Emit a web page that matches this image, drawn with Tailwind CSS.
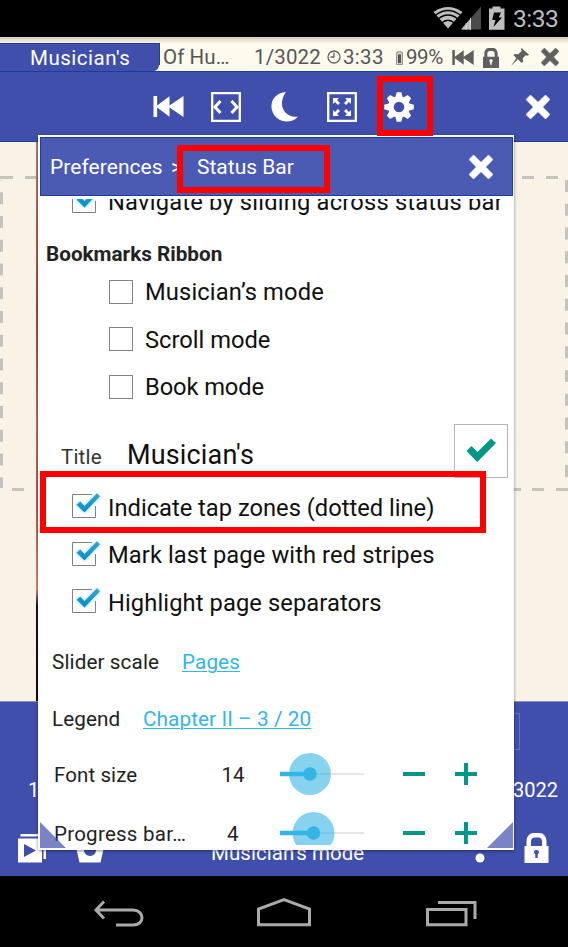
<!DOCTYPE html>
<html lang="en">
<head>
<meta charset="utf-8">
<title>Status Bar Preferences</title>
<script src="https://cdn.jsdelivr.net/npm/@tailwindcss/browser@4"></script>
</head>
<body class="w-[568px] h-[947px] overflow-hidden bg-black">
<svg class="absolute w-0 h-0">
  <defs>
    <symbol id="rewind" viewBox="0 0 30 21"><path d="M0 0h3.600v9.600L16 .3v9.300L30 0v21L16 11.400v9.300L3.600 11.400V21H0z"/></symbol>
    <symbol id="cross" viewBox="0 0 24 24"><path d="M4.500 0 12 7.300 19.500 0 24 4.500 16.700 12 24 19.500 19.500 24 12 16.700 4.500 24 0 19.500 7.300 12 0 4.500z" stroke="currentColor" stroke-width=".6" stroke-linejoin="round"/></symbol>
    <symbol id="lock" viewBox="0 0 24 30"><path fill-rule="evenodd" d="M0 13h2V8.500C2 3 5.500 0 9 0h6c3.500 0 7 3 7 8.500V13h2v17H0zM6.500 13h11V8.500C17.500 6 16 4.500 14 4.500h-4C8 4.500 6.500 6 6.500 8.500zM12 17a2.200 2.200 0 0 0-1.200 4.200V25h2.400v-3.800A2.200 2.200 0 0 0 12 17z"/></symbol>
    <linearGradient id="tick" x1="0" y1="0" x2="0" y2="1"><stop offset="0" stop-color="#3aa5d0"/><stop offset="1" stop-color="#008fc6"/></linearGradient>
    <filter id="glow" x="-40%" y="-40%" width="180%" height="180%"><feGaussianBlur stdDeviation="2"/></filter>
    <symbol id="checked" viewBox="0 0 34 30" overflow="visible">
      <path d="M24.500 14v11.500H1.500v-23H21" fill="none" stroke="#808080"/>
      <path d="M5 13l4-3.500 4.500 4.500L26 1l3.500 3.500L14 21z" fill="#8fd8f5" fill-opacity=".7" filter="url(#glow)"/>
      <path d="M5.500 12.800l3.700-3.200 4.300 4.400L26 1.200l3 3L13.500 20.600z" fill="url(#tick)"/>
    </symbol>
  </defs>
</svg>
<div class="relative w-[568px] h-[947px] flex flex-col font-['Roboto',sans-serif] overflow-hidden">

  <!-- system bar -->
  <div class="h-[37px] shrink-0 bg-black flex justify-end">
    <svg class="w-[134px] h-[37px] shrink-0" viewBox="434 0 134 37">
      <defs><clipPath id="fan"><path d="M447.500 29 430 9V0h36v9z"/></clipPath></defs>
      <path d="M433.500 12Q447.800 2 462.500 12L448 28.500z" fill="#bebebe"/>
      <g fill="none" stroke="#000" stroke-width="1.300" clip-path="url(#fan)">
        <path d="M435 15.500Q448 5.500 461 15.500M438 19Q448 11 458 19M441.500 23Q448 17.500 454.500 23"/>
      </g>
      <path d="M481 6.500V29.500H461z" fill="#4b4b4b"/><path d="M471 18v11.500H461z" fill="#bebebe"/><path d="M466 23v7M470.500 18v12" stroke="#e5e5e5" stroke-width=".7"/>
      <path d="M489 8.500h3.500V6.500h8v2h4v21.200H489z" fill="#bebebe"/>
      <path d="M494 12.500h7l-2.300 5h3.300l-8.500 9.500 2-7h-3.300z" fill="#000"/>
    </svg>
    <span class="absolute left-[513px] top-[5px] text-[24.5px] leading-[28px] text-[#bebebe] tracking-[-0.5px]">3:33</span>
  </div>

  <!-- reader tabs -->
  <div class="relative h-[35px] shrink-0 bg-gradient-to-b from-[#d2cbb9] via-[#fffaee] via-20% to-[#fffaee] flex items-end border-b border-[#193f9b] text-[20.5px] text-[#565656]">
    <div class="w-[160px] h-[28px] bg-[#404eac] border-t border-r border-[#193f9b] text-white flex items-center pl-[30px] pt-px"><span class="tracking-[0.5px]">Musician's</span></div>
    <div class="flex-1 h-[28px] flex items-center pl-[3px] pt-px">
      <span class="w-[91px] tracking-[0.1px]">Of Hu…</span>
      <span class="w-[73px] tracking-[0.15px]">1/3022</span>
      <svg class="w-[16px] h-[16px] mb-0.5" viewBox="0 0 16 16" fill="none" stroke="#656565" stroke-width="1.300"><circle cx="7" cy="8" r="6"/><path d="M7 3.500V8H3.500"/></svg>
      <span class="w-[52px] tracking-[0.3px]">3:33</span>
      <svg class="w-[10px] h-[14px]" viewBox="0 0 10 14"><path d="M1.500 1.500H3V0h3v1.500h1.500v12h-6z" fill="#cfccc3" stroke="#99968e"/><path d="M3 3.500h3V12H3z" fill="#555"/></svg>
      <span class="w-[46px] tracking-[-0.4px] pl-px">99%</span>
      <svg class="w-[22px] h-[15px] ml-px mb-px text-[#606060]" fill="currentColor"><use href="#rewind"/></svg>
      <svg class="w-[16px] h-[20px] ml-[9px] text-[#606060]" fill="currentColor"><use href="#lock"/></svg>
      <svg class="w-[18px] h-[18px] ml-[12px] mb-px" viewBox="0 0 18 18" fill="#606060"><path d="M10.500 0 18 6.800l-1.300.9-2-.4-3 3 .4 3.500-1.500 1.200-3.700-3.700L0 18l5.400-7.900L2.500 7.200 3.700 6l3.500.3 3.600-3.600-.8-1.500z"/></svg>
      <svg class="w-[18px] h-[18px] ml-[12px] mb-px text-[#606060]" fill="currentColor"><use href="#cross"/></svg>
    </div>
    <svg class="absolute left-[154px] top-[28px] w-[6px] h-[6px]" viewBox="0 0 6 6"><path d="M6 0v6H0Q5 5 5 0z" fill="#fffaee"/></svg>
  </div>

  <!-- toolbar -->
  <div class="h-[70px] shrink-0 bg-[#404eac] border-b border-[#193f9b] flex text-white pl-[153px]">
    <svg class="w-[31px] h-[21px] mt-[24px]" fill="currentColor"><use href="#rewind"/></svg>
    <svg class="w-[30px] h-[30px] ml-[27px] mt-[20px]" viewBox="0 0 30 30" fill="none" stroke="#fff"><path d="M1.200 1.200h27.600v27.600H1.200z" stroke-width="2.300"/><path d="M9.500 9l-5.500 6 5.500 6M20.500 9l5.500 6-5.500 6" stroke-width="3"/></svg>
    <svg class="w-[27px] h-[30px] ml-[30px] mt-[20px]" viewBox="0 0 27 30" fill="#fff"><path d="M15 0C4 1-1 9 .8 17.500 3 27 12 31 20 29c3-.8 5.500-2.500 6.800-4.500C13 26.500 6 12 15 0z"/></svg>
    <svg class="w-[30px] h-[30px] ml-[29px] mt-[20px]" viewBox="0 0 30 30" fill="#fff"><path d="M1.200 1.200h27.600v27.600H1.200z" fill="none" stroke="#fff" stroke-width="2.300"/><path d="M6 6h6l-2 2 3 3-2 2-3-3-2 2zM24 6v6l-2-2-3 3-2-2 3-3-2-2zM6 24v-6l2 2 3-3 2 2-3 3 2 2zM24 24h-6l2-2-3-3 2-2 3 3 2-2z"/></svg>
    <svg class="w-[30px] h-[30px] ml-[27px] mt-[20px]" viewBox="-15 -15 30 30" fill="#fff">
      <g><path id="tooth" d="M-3.900-9-2.300-14.800H2.300L3.900-9z"/><use href="#tooth" transform="rotate(45)"/><use href="#tooth" transform="rotate(90)"/><use href="#tooth" transform="rotate(135)"/><use href="#tooth" transform="rotate(180)"/><use href="#tooth" transform="rotate(225)"/><use href="#tooth" transform="rotate(270)"/><use href="#tooth" transform="rotate(315)"/></g>
      <circle r="8" fill="none" stroke="#fff" stroke-width="5.500"/>
    </svg>
    <svg class="w-[24px] h-[24px] ml-[112px] mt-[23px]" fill="currentColor"><use href="#cross"/></svg>
  </div>

  <!-- page with dashed tap zones -->
  <div class="h-[559px] shrink-0 bg-[#f8f3e6] flex justify-between">
    <svg class="w-[39px] h-[559px]" viewBox="0 142 39 559">
      <defs><linearGradient id="edge" x1="0" y1="0" x2="0" y2="1"><stop offset="0" stop-color="#b98573"/><stop offset=".3" stop-color="#a74c3c"/><stop offset=".5" stop-color="#c4705e"/><stop offset=".65" stop-color="#c05c4e"/><stop offset=".8" stop-color="#e0907c"/><stop offset=".83" stop-color="#15171c"/><stop offset="1" stop-color="#08110e"/></linearGradient></defs>
      <path d="M0 177.500h13M25 177.500h12M12 489.500h12M36 489.500h2" stroke="#c4c3be" stroke-width="3"/>
      <path d="M1.500 180v308" stroke="#c4c3be" stroke-width="3" stroke-dasharray="12 11.750" stroke-dashoffset="11.500"/>
      <path d="M36 142h3v559h-3z" fill="url(#edge)"/>
    </svg>
    <svg class="w-[54px] h-[559px]" viewBox="514 142 54 559">
      <path d="M522 177.500h12M546 177.500h12M514 489.500h7M532 489.500h12M556 489.500h12" stroke="#c4c3be" stroke-width="3"/>
      <path d="M566.500 180v298" stroke="#c4c3be" stroke-width="3" stroke-dasharray="12 11.750"/>
    </svg>
  </div>

  <!-- reader footer -->
  <div class="relative h-[175px] shrink-0 bg-[#404eac] border-t border-[#8a90bd] text-white text-[20px]">
    <div class="absolute right-[48px] top-[11px] w-[60px] h-[37px] border border-[#6470bd]"></div>
    <div class="flex justify-between pl-[28px] pr-[10px] pt-[73px] leading-[30px]"><span>1</span><span>3022</span></div>
    <div class="flex items-end h-[58px] pl-[17px] pr-[19px]">
      <svg class="w-[29px] h-[30px]" viewBox="0 0 29 30" fill="#fff"><path fill-rule="evenodd" d="M1 5.500h24v24H1zM7 11v13l12-6.500z"/><path d="M3.500 1H23v2.500H3.500zM26.500 10H29v16h-2.500z"/></svg>
      <svg class="w-[28px] h-[28px] ml-[30px]" viewBox="0 0 28 28" fill="#fff"><path fill-rule="evenodd" d="M0 12h28l-3.500 15.500h-21zM14 9a6 6 0 1 0 .1 0z"/></svg>
      <span class="ml-[107px] tracking-[0.05px] text-[20.5px] leading-[24px] whitespace-nowrap -mb-[2px]">Musician's mode</span>
      <svg class="w-[10px] h-[30px] ml-auto mr-[39px]" viewBox="0 0 10 30" fill="#fff"><circle cx="5" cy="25" r="4.500"/><circle cx="5" cy="12.500" r="4.500"/></svg>
      <svg class="w-[25px] h-[30px]" fill="#fff"><use href="#lock"/></svg>
    </div>
  </div>

  <!-- navigation bar -->
  <div class="h-[71px] shrink-0 bg-black">
    <svg class="w-[568px] h-[71px]" viewBox="0 876 568 71" fill="none" stroke="#aaa" stroke-width="3">
      <path d="M104 901.500 96 910l8 8.500M96 910h37c11.500 0 12.500 15 0 15h-17"/>
      <path d="M258.500 924.700V909L284 899.500 309.500 909v15.700z"/>
      <path d="M427.500 909.500H466v15.300h-38.500zM438 902.500h37V919"/>
    </svg>
  </div>

  <!-- preferences dialog -->
  <div class="absolute left-[38px] top-[135px] w-[476px] h-[715px] bg-white border-2 border-r-1 border-[#fbfbff] flex flex-col shadow-[0_1px_3px_rgba(0,0,0,0.45)]">
    <div class="h-[59px] shrink-0 bg-[#4b5bb3] border border-[#193f9b] flex items-center text-white text-[21px] pl-[9px] pr-[19px]">
      <span class="w-[121px] pt-[2px] tracking-[0.05px]">Preferences</span><span class="w-[26px] pt-[2px]">&gt;</span><span class="pt-[2px]">Status Bar</span>
      <svg class="w-[24px] h-[24px] ml-auto" fill="currentColor"><use href="#cross"/></svg>
    </div>
    <div class="mt-[3px] h-[646px] shrink-0 overflow-hidden flex flex-col text-[23.7px] text-[#101010] pl-[6px]">
      <div class="h-[47px] mt-[-21px] shrink-0 flex items-center pl-[25px]"><svg class="w-[34px] h-[30px] mr-[3px] shrink-0"><use href="#checked"/></svg><span class="whitespace-nowrap tracking-[0.2px] pt-[3px]">Navigate by sliding across status bar</span></div>
      <div class="h-[43px] shrink-0 flex items-center pt-[17px] text-[20.7px] font-bold text-[#222]"><span>Bookmarks Ribbon</span></div>
      <div class="h-[47px] shrink-0 flex items-center pl-[63px] gap-[12px]"><div class="w-[24px] h-[24px] border border-[#848484]"></div><span class="pt-[3px] tracking-[0.15px]">Musician’s mode</span></div>
      <div class="h-[48px] shrink-0 flex items-center pl-[63px] gap-[12px]"><div class="w-[24px] h-[24px] border border-[#848484]"></div><span class="pt-[3px]">Scroll mode</span></div>
      <div class="h-[47px] shrink-0 flex items-center pl-[63px] gap-[12px]"><div class="w-[24px] h-[24px] border border-[#848484]"></div><span class="pt-[3px] tracking-[-0.1px]">Book mode</span></div>
      <div class="h-[73px] shrink-0 flex items-start pl-[15px] pr-[5px]">
        <span class="w-[66px] pt-[34px] text-[20.5px] leading-[26px] text-[#333] tracking-[0.2px]">Title</span>
        <span class="pt-[28px] text-[27px] leading-[34px] tracking-[0.15px]">Musician's</span>
        <div class="ml-auto mt-[14px] w-[54px] h-[54px] border border-[#b5b5b5] flex items-center justify-center"><svg class="w-[30px] h-[24px] mb-[2px]" viewBox="0 0 30 24"><path d="M.5 13l5-5 6 6L25 .5l5 4.500-18.800 19z" fill="#009688"/></svg></div>
      </div>
      <div class="h-[48px] shrink-0 flex items-center pl-[25px]"><svg class="w-[34px] h-[30px] mr-[3px]"><use href="#checked"/></svg><span class="pt-[3px]">Indicate tap zones (dotted line)</span></div>
      <div class="h-[47px] shrink-0 flex items-center pl-[25px]"><svg class="w-[34px] h-[30px] mr-[3px]"><use href="#checked"/></svg><span class="pt-[3px] tracking-[0.1px]">Mark last page with red stripes</span></div>
      <div class="h-[48px] shrink-0 flex items-center pl-[25px]"><svg class="w-[34px] h-[30px] mr-[3px]"><use href="#checked"/></svg><span class="pt-[3px] tracking-[0.1px]">Highlight page separators</span></div>
      <div class="h-[72px] shrink-0 flex items-center pl-[6px] pt-px text-[20.7px] tracking-[0.1px] text-[#222]"><span class="w-[130px]">Slider scale</span><span class="text-[#33b5e5] underline underline-offset-[2px] decoration-1">Pages</span></div>
      <div class="h-[43px] shrink-0 flex items-center pl-[6px] pt-px text-[20.7px] tracking-[0.1px] text-[#222]"><span class="w-[91px]">Legend</span><span class="text-[#33b5e5] underline underline-offset-[2px] decoration-1">Chapter II – 3 / 20</span></div>
      <div class="h-[66px] shrink-0 flex items-center pl-[8px] text-[20.5px] tracking-[0.1px] text-[#222]">
        <span class="w-[150px] pt-[2px]">Font size</span><span class="w-[58px] pt-[2px] text-center">14</span>
        <svg class="w-[86px] h-[44px] ml-[17px]" viewBox="0 0 86 44"><path d="M1 22h84" stroke="#ddd" stroke-width="1.500"/><circle cx="31" cy="22" r="21" fill="#86d2ef"/><path d="M1 22h30" stroke="#33b5e5" stroke-width="4.500"/><path d="M31 22h20" stroke="#74c2de" stroke-width="1.200"/><circle cx="31" cy="22" r="6.700" fill="#33b5e5"/></svg>
        <div class="ml-[38px] w-[22px] h-[4px] bg-[#009688]"></div>
        <svg class="ml-[30px] w-[22px] h-[22px]" viewBox="0 0 22 22"><path d="M0 11h22M11 0v22" stroke="#009688" stroke-width="4"/></svg>
      </div>
      <div class="h-[52px] shrink-0 flex items-center pl-[8px] text-[20.5px] tracking-[0.25px] text-[#222]">
        <span class="w-[150px] pt-[2px]">Progress bar…</span><span class="w-[58px] pt-[2px] text-center">4</span>
        <svg class="w-[86px] h-[44px] ml-[17px]" viewBox="0 0 86 44"><path d="M1 22h84" stroke="#ddd" stroke-width="1.500"/><circle cx="34.500" cy="22" r="21" fill="#86d2ef"/><path d="M1 22h33" stroke="#33b5e5" stroke-width="4.500"/><path d="M34 22h21" stroke="#74c2de" stroke-width="1.200"/><circle cx="34.500" cy="22" r="6.700" fill="#33b5e5"/></svg>
        <div class="ml-[38px] w-[22px] h-[4px] bg-[#009688]"></div>
        <svg class="ml-[30px] w-[22px] h-[22px]" viewBox="0 0 22 22"><path d="M0 11h22M11 0v22" stroke="#009688" stroke-width="4"/></svg>
      </div>
    </div>
    <svg class="absolute left-0 bottom-0 w-[26px] h-[26px]" viewBox="0 0 26 26"><path d="M0 0v26h26z" fill="#404eac" fill-opacity=".7"/></svg>
    <svg class="absolute right-0 bottom-0 w-[26px] h-[26px]" viewBox="0 0 26 26"><path d="M26 0v26H0z" fill="#404eac" fill-opacity=".7"/></svg>
  </div>

  <!-- highlight frames -->
  <div class="absolute left-[377px] top-[76px] w-[56px] h-[60px] border-[6px] border-[#f00]"></div>
  <div class="absolute left-[177px] top-[145px] w-[153px] h-[48px] border-[6px] border-[#f00]"></div>
  <div class="absolute left-[40px] top-[471px] w-[446px] h-[62px] border-[6px] border-[#f00]"></div>
</div>
</body>
</html>
